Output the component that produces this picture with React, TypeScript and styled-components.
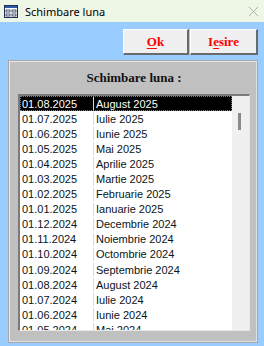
import React from 'react'
import styled, { createGlobalStyle } from 'styled-components'

const GlobalStyle = createGlobalStyle`
  html, body {
    margin: 0;
    padding: 0;
    background: #99ccff;
  }
`

const LUNI = [
  'Ianuarie', 'Februarie', 'Martie', 'Aprilie', 'Mai', 'Iunie',
  'Iulie', 'August', 'Septembrie', 'Octombrie', 'Noiembrie', 'Decembrie'
]

// from 08.2025 going back
const rows = Array.from({ length: 16 }, (_, i) => {
  const idx = 2025 * 12 + 7 - i
  const year = Math.floor(idx / 12)
  const month = idx % 12
  const mm = String(month + 1).padStart(2, '0')
  return { date: `01.${mm}.${year}`, label: `${LUNI[month]} ${year}` }
})

export default function App() {
  return (
    <Window>
      <GlobalStyle />
      <TitleBar>
        <WinIcon viewBox='0 0 16 16'>
          <rect x='1.5' y='1.5' width='13' height='12' fill='#fff' stroke='#1f2f4f' />
          <rect x='2' y='2' width='12' height='2' fill='#2a5aa8' />
          <rect x='3' y='6' width='4' height='2' fill='#fff' stroke='#1f2f4f' strokeWidth='0.8' />
          <rect x='9' y='6' width='4' height='2' fill='#fff' stroke='#1f2f4f' strokeWidth='0.8' />
          <rect x='3' y='10' width='4' height='2' fill='#fff' stroke='#1f2f4f' strokeWidth='0.8' />
          <rect x='9' y='10' width='4' height='2' fill='#fff' stroke='#1f2f4f' strokeWidth='0.8' />
        </WinIcon>
        <TitleText>Schimbare luna</TitleText>
        <CloseBtn viewBox='0 0 12 12'>
          <path d='M1 1 L11 11 M11 1 L1 11' stroke='#a8a8a8' strokeWidth='1' />
        </CloseBtn>
      </TitleBar>
      <Body>
        <Toolbar>
          <Button $w={66}>
            <u>O</u>k
          </Button>
          <Button $w={68}>
            I<u>e</u>sire
          </Button>
        </Toolbar>
        <Panel>
          <Heading>Schimbare luna :</Heading>
          <ListBox>
            <Rows>
              {rows.map((r, i) => (
                <Row key={r.date} $selected={i === 0}>
                  <DateCell>{r.date}</DateCell>
                  <LabelCell>{r.label}</LabelCell>
                </Row>
              ))}
            </Rows>
            <ScrollTrack>
              <Thumb />
            </ScrollTrack>
          </ListBox>
        </Panel>
      </Body>
    </Window>
  )
}

const Window = styled.div`
  width: 264px;
  height: 346px;
  display: flex;
  flex-direction: column;
  overflow: hidden;
  background: #99ccff;
`

const TitleBar = styled.div`
  height: 22px;
  flex-shrink: 0;
  display: flex;
  align-items: center;
  background: #eef6e6;
  padding: 0 3px 0 3px;
  box-sizing: border-box;
`

const WinIcon = styled.svg`
  width: 16px;
  height: 16px;
  margin-top: 2px;
`

const TitleText = styled.span`
  flex: 1;
  margin-left: 6px;
  font-family: 'Noto Sans', 'Open Sans', sans-serif;
  font-size: 11px;
  color: #000;
`

const CloseBtn = styled.svg`
  width: 11px;
  height: 11px;
  margin-right: 2px;
`

const Body = styled.div`
  flex: 1;
  min-height: 0;
  display: flex;
  flex-direction: column;
  padding: 7px 6px 3px 8px;
  box-sizing: border-box;
`

const Toolbar = styled.div`
  display: flex;
  flex-shrink: 0;
  justify-content: flex-end;
  gap: 1px;
  height: 26px;
`

const Button = styled.div<{ $w: number }>`
  width: ${(p) => p.$w}px;
  height: 26px;
  box-sizing: border-box;
  display: flex;
  align-items: center;
  justify-content: center;
  background: #f0f0f0;
  border-top: 1px solid #ffffff;
  border-left: 1px solid #ffffff;
  border-right: 2px solid #6a6a6a;
  border-bottom: 2px solid #6a6a6a;
  font-family: 'Liberation Serif', serif;
  font-weight: bold;
  font-size: 13px;
  color: #ff0000;
  u {
    text-decoration-thickness: 1px;
    text-underline-offset: 2px;
  }
`

const Panel = styled.div`
  flex: 1;
  min-height: 0;
  margin-top: 5px;
  display: flex;
  flex-direction: column;
  background: #c0c0c0;
  border: 1px solid #a8a8a8;
  box-shadow: inset 1px 1px 0 #e8e8e8, inset -1px -1px 0 #e0e0e0;
  box-sizing: border-box;
  padding: 0 7px 11px 9px;
`

const Heading = styled.div`
  height: 33px;
  flex-shrink: 0;
  display: flex;
  align-items: center;
  justify-content: center;
  font-family: 'Liberation Serif', serif;
  font-weight: bold;
  font-size: 13px;
  color: #111;
`

const ListBox = styled.div`
  flex: 1;
  min-height: 0;
  display: flex;
  background: #fff;
  border-top: 2px solid #7a7a7a;
  border-left: 2px solid #7a7a7a;
  border-right: 1px solid #e8e8e8;
  border-bottom: 1px solid #e8e8e8;
  overflow: hidden;
`

const Rows = styled.div`
  flex: 1;
  min-height: 0;
  overflow: hidden;
`

const Row = styled.div<{ $selected?: boolean }>`
  height: 15.1px;
  display: flex;
  align-items: center;
  box-sizing: border-box;
  font-family: 'Liberation Sans', Arial, sans-serif;
  font-size: 11px;
  color: ${(p) => (p.$selected ? '#fff' : '#0a1420')};
  background: ${(p) => (p.$selected ? '#000' : 'transparent')};
  border: 1px dotted ${(p) => (p.$selected ? '#808080' : 'transparent')};
`

const DateCell = styled.div`
  width: 73px;
  padding-left: 1px;
  box-sizing: border-box;
  height: 100%;
  display: flex;
  align-items: center;
  border-right: 1px solid #d8d8d8;
`

const LabelCell = styled.div`
  padding-left: 2px;
`

const ScrollTrack = styled.div`
  width: 17px;
  flex-shrink: 0;
  background: #f0f0f0;
  position: relative;
`

const Thumb = styled.div`
  position: absolute;
  left: 6px;
  top: 17px;
  width: 3px;
  height: 17px;
  background: #8a8a8a;
`
